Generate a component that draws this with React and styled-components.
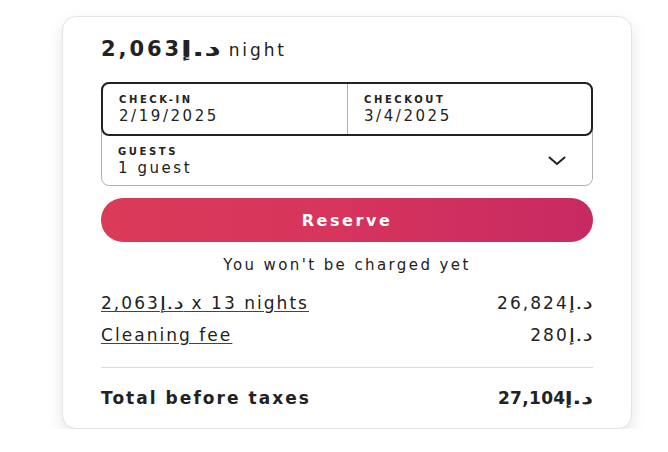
import React from "react";
import styled, { createGlobalStyle } from "styled-components";

const GlobalStyle = createGlobalStyle`
  body {
    margin: 0;
    background: #fff;
    font-family: "DejaVu Sans", "Liberation Sans", sans-serif;
    color: #222;
  }
`;

const AED = "د.إ";

const Page = styled.div`
  padding: 16px 0 0 62px;
`;

const Card = styled.div`
  box-sizing: border-box;
  width: 570px;
  padding: 20px 38px 20px;
  border: 1px solid #e4e4e4;
  border-radius: 14px;
  box-shadow: 0 6px 16px rgba(0, 0, 0, 0.1);
  background: #fff;
`;

const PriceTitle = styled.div`
  display: flex;
  align-items: baseline;
  gap: 8px;
`;

const BigPrice = styled.span`
  font-size: 21px;
  font-weight: 700;
  letter-spacing: 0.14em;
`;

const Unit = styled.span`
  font-size: 17px;
  letter-spacing: 0.17em;
`;

// kept as its own box so the digits beside it keep their letter-spacing;
// widened to match the broad glyphs of the original font
const Cur = styled.span`
  display: inline-block;
  margin-left: ${(p) => (p.wide ? "0.6em" : "0.38em")};
  letter-spacing: 0;
  transform: scaleX(${(p) => (p.wide ? 1.55 : 1.35)});
  transform-origin: right center;
  text-decoration: ${(p) => (p.underline ? "underline #444 1px" : "none")};
  text-underline-offset: 2px;
`;

const Money = ({ value, underline, wide, className }) => (
  <span className={className}>
    {value}
    <Cur underline={underline} wide={wide}>
      {AED}
    </Cur>
  </span>
);

const Picker = styled.div`
  margin-top: 21px;
  border: 1px solid #b0b0b0;
  border-radius: 8px;
`;

const DateRow = styled.div`
  display: grid;
  grid-template-columns: 1fr 1fr;
  height: 50px;
  margin: -1px -1px 0;
  border: 2px solid #222;
  border-radius: 8px;
`;

const Field = styled.div`
  display: flex;
  flex-direction: column;
  justify-content: center;
  padding: 0 16px;
  border-left: ${(p) => (p.divided ? "1px solid #b0b0b0" : "none")};
`;

const Label = styled.div`
  font-size: 10px;
  font-weight: 700;
  letter-spacing: 0.26em;
  line-height: 14px;
`;

const Value = styled.div`
  font-size: 15px;
  letter-spacing: 0.17em;
  line-height: 18px;
`;

const GuestRow = styled.div`
  display: flex;
  align-items: center;
  justify-content: space-between;
  height: 49px;
  padding-right: 26px;
`;

const ReserveButton = styled.button`
  display: block;
  width: 100%;
  height: 44px;
  margin-top: 12px;
  border: none;
  border-radius: 22px;
  background: linear-gradient(90deg, #d93b58 0%, #d6345d 50%, #c72a62 100%);
  color: #fff;
  font-family: inherit;
  font-size: 16px;
  font-weight: 700;
  letter-spacing: 0.16em;
  cursor: pointer;
`;

const Note = styled.div`
  margin-top: 13px;
  text-align: center;
  font-size: 15px;
  letter-spacing: 0.16em;
  line-height: 20px;
`;

const Rows = styled.div`
  display: flex;
  flex-direction: column;
  gap: 12px;
  margin-top: 18px;
  padding-bottom: 22px;
  border-bottom: 1px solid #ddd;
`;

const Row = styled.div`
  display: flex;
  justify-content: space-between;
  align-items: center;
  font-size: 17px;
  line-height: 20px;
  letter-spacing: 0.12em;
  font-weight: ${(p) => (p.bold ? 700 : 400)};
`;

const Linked = styled.span`
  text-decoration: underline;
  text-decoration-color: #444;
  text-underline-offset: 2px;
`;

const Total = styled(Row)`
  margin-top: 20px;
`;

const TotalMoney = styled(Money)`
  letter-spacing: 0.02em;
`;

const Chevron = () => (
  <svg width="18" height="10" viewBox="0 0 18 10" fill="none">
    <path d="M1.5 1.5 9 8l7.5-6.5" stroke="#222" strokeWidth="2" strokeLinecap="round" strokeLinejoin="round" />
  </svg>
);

export default function App() {
  return (
    <Page>
      <GlobalStyle />
      <Card>
        <PriceTitle>
          <BigPrice>
            <Money value="2,063" wide />
          </BigPrice>
          <Unit>night</Unit>
        </PriceTitle>

        <Picker>
          <DateRow>
            <Field>
              <Label>CHECK-IN</Label>
              <Value>2/19/2025</Value>
            </Field>
            <Field divided>
              <Label>CHECKOUT</Label>
              <Value>3/4/2025</Value>
            </Field>
          </DateRow>
          <GuestRow>
            <Field>
              <Label>GUESTS</Label>
              <Value>1 guest</Value>
            </Field>
            <Chevron />
          </GuestRow>
        </Picker>

        <ReserveButton>Reserve</ReserveButton>
        <Note>You won't be charged yet</Note>

        <Rows>
          <Row>
            <Linked>
              <Money value="2,063" underline /> x 13 nights
            </Linked>
            <Money value="26,824" />
          </Row>
          <Row>
            <Linked>Cleaning fee</Linked>
            <Money value="280" />
          </Row>
        </Rows>

        <Total bold>
          <span>Total before taxes</span>
          <TotalMoney value="27,104" />
        </Total>
      </Card>
    </Page>
  );
}
